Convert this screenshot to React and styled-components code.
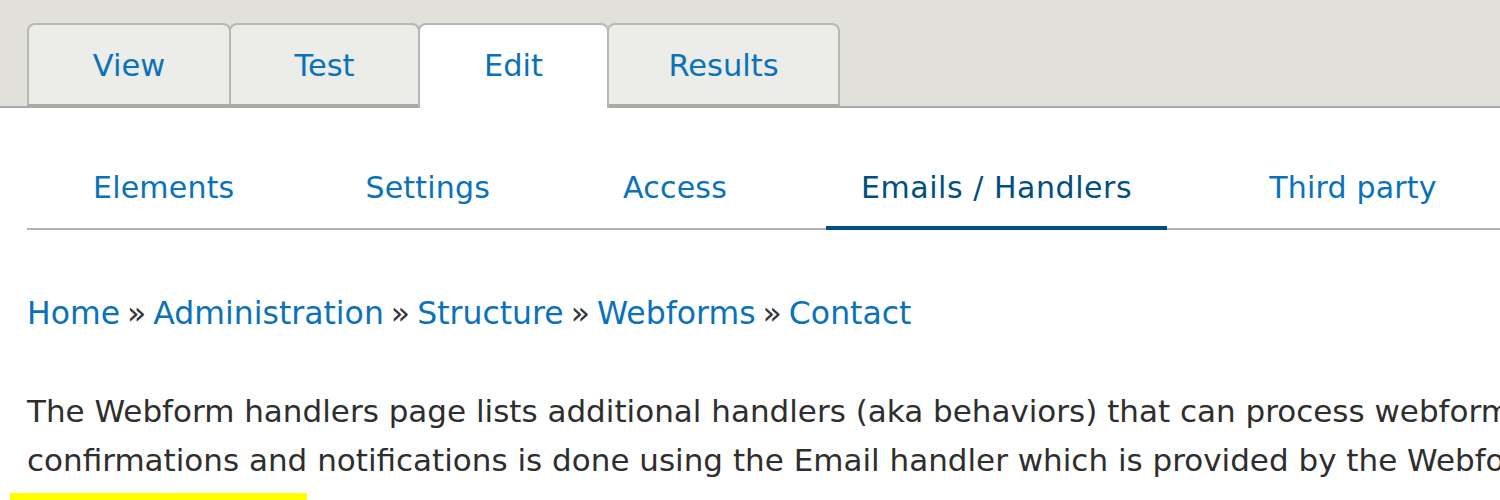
import React from 'react';
import styled, { createGlobalStyle } from 'styled-components';

const GlobalStyle = createGlobalStyle`
  html, body {
    margin: 0;
    padding: 0;
    background: #ffffff;
    font-family: "DejaVu Sans", Verdana, sans-serif;
    overflow: hidden;
  }
`;

const Page = styled.div`
  width: 1500px;
  height: 500px;
  overflow: hidden;
  background: #fff;
`;

const Header = styled.div`
  background: #e1e0db;
  padding: 23px 0 0 27px;
  border-bottom: 2px solid #a9a9a6;
  height: 83px;
  box-sizing: content-box;
`;

const PrimaryTabs = styled.ul`
  display: flex;
  margin: 0;
  padding: 0;
  list-style: none;
  height: 85px;
`;

const PrimaryTab = styled.li`
  box-sizing: border-box;
  width: ${p => p.$w}px;
  height: ${p => (p.$active ? 85 : 83)}px;
  margin-left: ${p => (p.$first ? 0 : -2)}px;
  display: flex;
  align-items: center;
  justify-content: center;
  background: ${p => (p.$active ? '#ffffff' : '#ecece9')};
  border: 2px solid #b7b7b3;
  border-bottom: ${p => (p.$active ? 'none' : '2px solid #a9a9a6')};
  border-radius: 8px 8px 0 0;
  position: relative;
  z-index: ${p => (p.$active ? 1 : 0)};
  font-size: 30.5px;
  color: #0a72bb;
  padding: ${p => (p.$active ? '0 0 2px' : '2px 0 0')};
`;

const Body = styled.div`
  padding: 0 0 0 27px;
`;

const SecondaryTabs = styled.ul`
  display: flex;
  margin: 0;
  padding: 0 0 0 31px;
  list-style: none;
  height: 122px;
  border-bottom: 2px solid #b3b3b3;
  box-sizing: border-box;
`;

const SecondaryTab = styled.li`
  display: flex;
  align-items: center;
  padding: 41px 35px 0;
  margin-right: ${p => p.$gap}px;
  font-size: 30px;
  letter-spacing: ${p => (p.$active ? 0.55 : 0.2)}px;
  color: ${p => (p.$active ? '#004f80' : '#0a72bb')};
  border-bottom: 4px solid ${p => (p.$active ? '#004f80' : 'transparent')};
  margin-bottom: -2px;
  white-space: nowrap;
`;

const Breadcrumb = styled.nav`
  margin-top: 63px;
  font-size: 31.5px;
  word-spacing: -3px;
  color: #333;
  white-space: nowrap;
  line-height: 40px;
`;

const Crumb = styled.a`
  color: #0a72bb;
  text-decoration: none;
`;

const Description = styled.p`
  margin: 54px 0 0;
  font-size: 31px;
  line-height: 49px;
  color: #2e2e2e;
  white-space: nowrap;
`;

const Highlight = styled.div`
  margin: 8px 0 0 -17px;
  width: 297px;
  height: 10px;
  background: #ffff00;
`;

const primary = [
  { label: 'View', w: 204 },
  { label: 'Test', w: 191 },
  { label: 'Edit', w: 191, active: true },
  { label: 'Results', w: 233 },
];

const secondary = [
  { label: 'Elements', gap: 61 },
  { label: 'Settings', gap: 63 },
  { label: 'Access', gap: 64 },
  { label: 'Emails / Handlers', gap: 67, active: true },
  { label: 'Third party', gap: 0 },
];

const crumbs = ['Home', 'Administration', 'Structure', 'Webforms', 'Contact'];

export default function App() {
  return (
    <Page>
      <GlobalStyle />
      <Header>
        <PrimaryTabs>
          {primary.map((t, i) => (
            <PrimaryTab key={t.label} $w={t.w} $first={i === 0} $active={t.active}>
              {t.label}
            </PrimaryTab>
          ))}
        </PrimaryTabs>
      </Header>
      <Body>
        <SecondaryTabs>
          {secondary.map(t => (
            <SecondaryTab key={t.label} $gap={t.gap} $active={t.active}>
              {t.label}
            </SecondaryTab>
          ))}
        </SecondaryTabs>
        <Breadcrumb>
          {crumbs.map((c, i) => (
            <React.Fragment key={c}>
              {i > 0 && ' » '}
              <Crumb href="#">{c}</Crumb>
            </React.Fragment>
          ))}
        </Breadcrumb>
        <Description>
          The Webform handlers page lists additional handlers (aka behaviors) that can process webform submissions.
          <br />
          confirmations and notifications is done using the Email handler which is provided by the Webform module.
        </Description>
        <Highlight />
      </Body>
    </Page>
  );
}
